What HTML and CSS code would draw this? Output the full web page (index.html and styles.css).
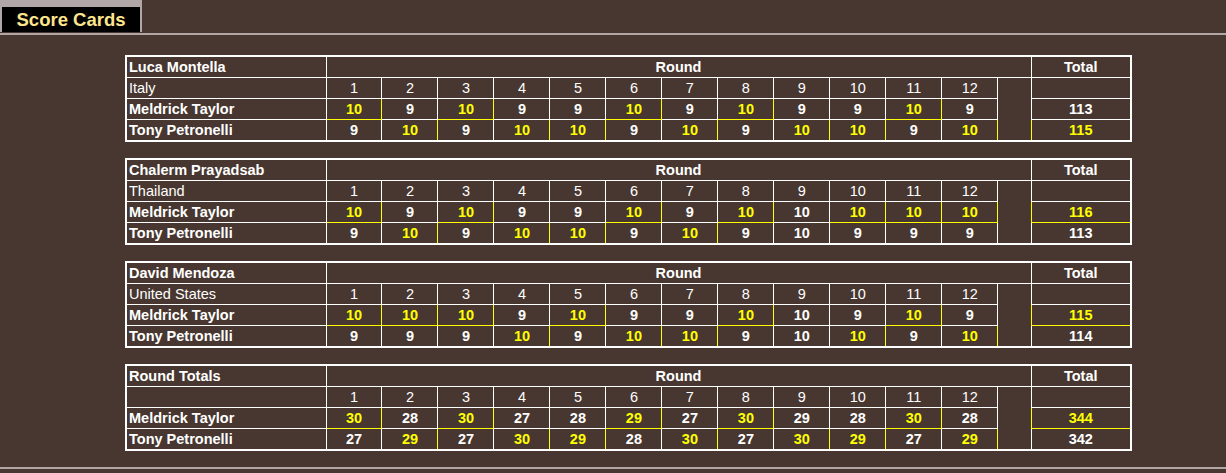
FILE: index.html
```html
<!DOCTYPE html>
<html>
<head>
<meta charset="utf-8">
<title>Score Cards</title>
<link rel="stylesheet" href="styles.css">
</head>
<body>
<div class="tabs">
  <div class="tab"><span class="tab-label">Score Cards</span></div>
</div>
<div class="cards">
  <table class="card">
    <colgroup><col class="c-name"><col span="12"><col class="c-sp"><col class="c-tot"></colgroup>
    <tr class="head"><td class="name">Luca Montella</td><td colspan="13">Round</td><td>Total</td></tr>
    <tr class="rounds"><td class="country">Italy</td><td>1</td><td>2</td><td>3</td><td>4</td><td>5</td><td>6</td><td>7</td><td>8</td><td>9</td><td>10</td><td>11</td><td>12</td><td class="sp" rowspan="3"></td><td></td></tr>
    <tr class="score"><td class="name">Meldrick Taylor</td><td class="w">10</td><td>9</td><td class="w">10</td><td>9</td><td>9</td><td class="w">10</td><td>9</td><td class="w">10</td><td>9</td><td>9</td><td class="w">10</td><td>9</td><td class="tot">113</td></tr>
    <tr class="score"><td class="name">Tony Petronelli</td><td>9</td><td class="w">10</td><td>9</td><td class="w">10</td><td class="w">10</td><td>9</td><td class="w">10</td><td>9</td><td class="w">10</td><td class="w">10</td><td>9</td><td class="w">10</td><td class="tot w">115</td></tr>
  </table>
  <table class="card">
    <colgroup><col class="c-name"><col span="12"><col class="c-sp"><col class="c-tot"></colgroup>
    <tr class="head"><td class="name">Chalerm Prayadsab</td><td colspan="13">Round</td><td>Total</td></tr>
    <tr class="rounds"><td class="country">Thailand</td><td>1</td><td>2</td><td>3</td><td>4</td><td>5</td><td>6</td><td>7</td><td>8</td><td>9</td><td>10</td><td>11</td><td>12</td><td class="sp" rowspan="3"></td><td></td></tr>
    <tr class="score"><td class="name">Meldrick Taylor</td><td class="w">10</td><td>9</td><td class="w">10</td><td>9</td><td>9</td><td class="w">10</td><td>9</td><td class="w">10</td><td>10</td><td class="w">10</td><td class="w">10</td><td class="w">10</td><td class="tot w">116</td></tr>
    <tr class="score"><td class="name">Tony Petronelli</td><td>9</td><td class="w">10</td><td>9</td><td class="w">10</td><td class="w">10</td><td>9</td><td class="w">10</td><td>9</td><td>10</td><td>9</td><td>9</td><td>9</td><td class="tot">113</td></tr>
  </table>
  <table class="card">
    <colgroup><col class="c-name"><col span="12"><col class="c-sp"><col class="c-tot"></colgroup>
    <tr class="head"><td class="name">David Mendoza</td><td colspan="13">Round</td><td>Total</td></tr>
    <tr class="rounds"><td class="country">United States</td><td>1</td><td>2</td><td>3</td><td>4</td><td>5</td><td>6</td><td>7</td><td>8</td><td>9</td><td>10</td><td>11</td><td>12</td><td class="sp" rowspan="3"></td><td></td></tr>
    <tr class="score"><td class="name">Meldrick Taylor</td><td class="w">10</td><td class="w">10</td><td class="w">10</td><td>9</td><td class="w">10</td><td>9</td><td>9</td><td class="w">10</td><td>10</td><td>9</td><td class="w">10</td><td>9</td><td class="tot w">115</td></tr>
    <tr class="score"><td class="name">Tony Petronelli</td><td>9</td><td>9</td><td>9</td><td class="w">10</td><td>9</td><td class="w">10</td><td class="w">10</td><td>9</td><td>10</td><td class="w">10</td><td>9</td><td class="w">10</td><td class="tot">114</td></tr>
  </table>
  <table class="card">
    <colgroup><col class="c-name"><col span="12"><col class="c-sp"><col class="c-tot"></colgroup>
    <tr class="head"><td class="name">Round Totals</td><td colspan="13">Round</td><td>Total</td></tr>
    <tr class="rounds"><td class="country"></td><td>1</td><td>2</td><td>3</td><td>4</td><td>5</td><td>6</td><td>7</td><td>8</td><td>9</td><td>10</td><td>11</td><td>12</td><td class="sp" rowspan="3"></td><td></td></tr>
    <tr class="score"><td class="name">Meldrick Taylor</td><td class="w">30</td><td>28</td><td class="w">30</td><td>27</td><td>28</td><td class="w">29</td><td>27</td><td class="w">30</td><td>29</td><td>28</td><td class="w">30</td><td>28</td><td class="tot w">344</td></tr>
    <tr class="score"><td class="name">Tony Petronelli</td><td>27</td><td class="w">29</td><td>27</td><td class="w">30</td><td class="w">29</td><td>28</td><td class="w">30</td><td>27</td><td class="w">30</td><td class="w">29</td><td>27</td><td class="w">29</td><td class="tot">342</td></tr>
  </table>
</div>
<div class="footer"></div>
</body>
</html>
```
FILE: styles.css
```css
html, body {
  margin: 0;
  padding: 0;
}
body {
  background: #483730;
  color: #ffffff;
  font-family: "Liberation Sans", Arial, sans-serif;
}
.tabs {
  display: flex;
  height: 33px;
  border-bottom: 2px solid #b0a7a6;
}
.tab {
  width: 142px;
  height: 32px;
  box-sizing: border-box;
  padding: 7px 2px 0 2px;
  background: #b0a7a6;
}
.tab-label {
  display: block;
  height: 25px;
  background: #000000;
  color: #fde58c;
  font-weight: bold;
  font-size: 18.5px;
  line-height: 25px;
  text-align: center;
}
.cards {
  padding: 20px 0 0 125px;
}
.card {
  border-collapse: collapse;
  border: 2px solid #ffffff;
  width: 1007px;
  table-layout: fixed;
  margin-bottom: 16px;
}
.c-name { width: 200px; }
.c-sp { width: 33px; }
.c-tot { width: 100px; }
.card td {
  border: 1px solid #ffffff;
  padding: 2px 2px;
  font-size: 14.5px;
  line-height: 16px;
  height: 16px;
  text-align: center;
  white-space: nowrap;
}
.card .head td {
  font-weight: bold;
}
.card td.name {
  text-align: left;
  font-weight: bold;
}
.card td.country {
  text-align: left;
  font-weight: normal;
}
.card .score td {
  font-weight: bold;
}
.card td.w {
  color: #ffff00;
  border-right-color: #ffff00;
  border-bottom-color: #ffff00;
}
.card td.w + td:not(.tot) {
  border-left-color: #ffff00;
}
.card td.tot.w {
  border-left-color: #ffff00;
}
.card td.sp {
  border: none;
}
.footer {
  margin-top: 2px;
  border-top: 2px solid #b0a7a6;
}
```
